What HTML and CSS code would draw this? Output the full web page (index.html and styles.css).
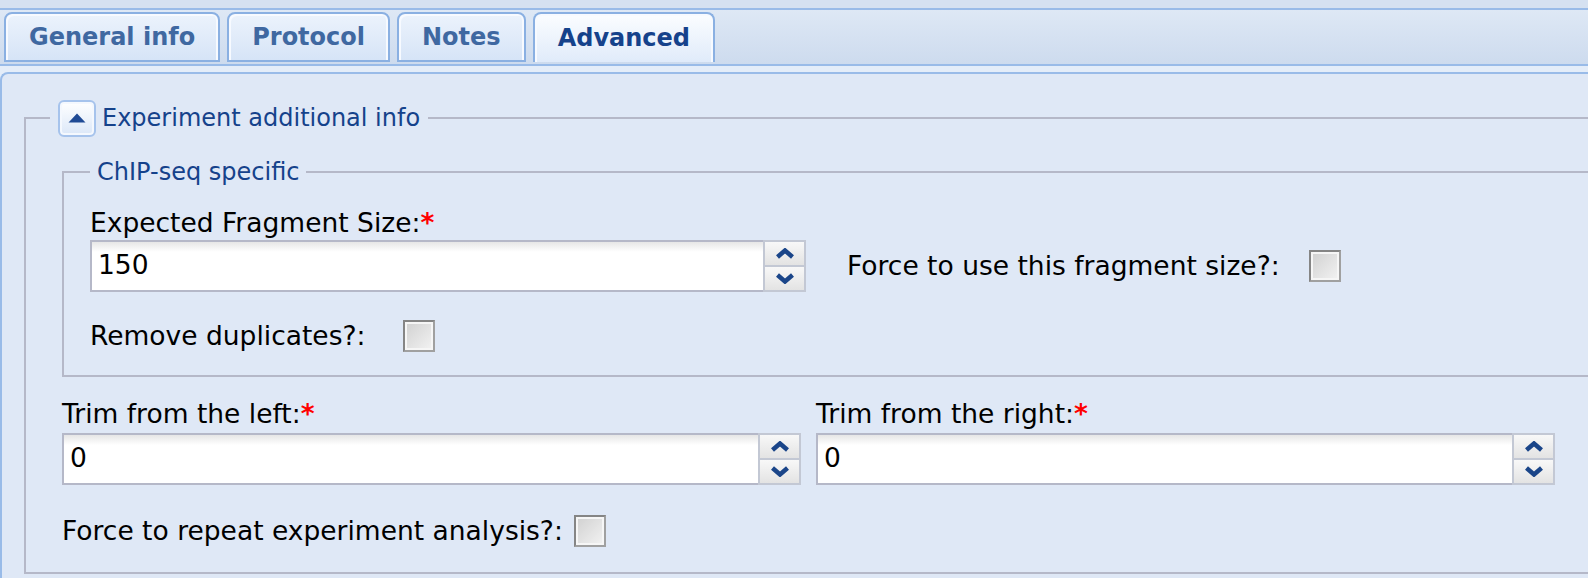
FILE: index.html
```html
<!DOCTYPE html>
<html>
<head>
<meta charset="utf-8">
<title>Advanced</title>
<link rel="stylesheet" href="styles.css">
</head>
<body>
<div class="header">
  <div class="strip">
    <div class="tab">General info</div>
    <div class="tab">Protocol</div>
    <div class="tab">Notes</div>
    <div class="tab active">Advanced</div>
  </div>
</div>
<div class="spacer">
  <div class="panel-body">
    <fieldset class="fs fs-outer">
      <legend class="lg lg-outer">
        <span class="lg-row">
          <span class="collapse-btn">
            <svg width="18" height="10" viewBox="0 0 18 10"><polygon points="9,0.5 17.5,9.5 0.5,9.5" fill="#1f4a95"/></svg>
          </span>
          <span class="lg-text">Experiment additional info</span>
        </span>
      </legend>
      <div class="outer-inner">
        <fieldset class="fs fs-chip">
          <legend class="lg lg-chip">ChIP-seq specific</legend>
          <div class="chip-inner">
            <div class="chip-grid">
              <div class="field-label">Expected Fragment Size:<span class="req">*</span></div>
              <div></div>
              <div class="spin">
                <div class="spin-input">150</div>
                <div class="spin-btns">
                  <div class="spin-btn"><svg width="20" height="11" viewBox="0 0 20 11"><polyline points="2.5,9 10,2.5 17.5,9" fill="none" stroke="#1a4589" stroke-width="4.5"/></svg></div>
                  <div class="spin-btn"><svg width="20" height="11" viewBox="0 0 20 11"><polyline points="2.5,2 10,8.5 17.5,2" fill="none" stroke="#1a4589" stroke-width="4.5"/></svg></div>
                </div>
              </div>
              <div class="check-field">
                <div class="check-label w-fragment">Force to use this fragment size?:</div>
                <div class="cb"></div>
              </div>
            </div>
            <div class="check-field remove-row">
              <div class="check-label w-remove">Remove duplicates?:</div>
              <div class="cb"></div>
            </div>
          </div>
        </fieldset>
        <div class="trim-grid">
          <div class="trim-col">
            <div class="field-label">Trim from the left:<span class="req">*</span></div>
            <div class="spin">
              <div class="spin-input">0</div>
              <div class="spin-btns">
                <div class="spin-btn"><svg width="20" height="11" viewBox="0 0 20 11"><polyline points="2.5,9 10,2.5 17.5,9" fill="none" stroke="#1a4589" stroke-width="4.5"/></svg></div>
                <div class="spin-btn"><svg width="20" height="11" viewBox="0 0 20 11"><polyline points="2.5,2 10,8.5 17.5,2" fill="none" stroke="#1a4589" stroke-width="4.5"/></svg></div>
              </div>
            </div>
          </div>
          <div class="trim-col">
            <div class="field-label">Trim from the right:<span class="req">*</span></div>
            <div class="spin">
              <div class="spin-input">0</div>
              <div class="spin-btns">
                <div class="spin-btn"><svg width="20" height="11" viewBox="0 0 20 11"><polyline points="2.5,9 10,2.5 17.5,9" fill="none" stroke="#1a4589" stroke-width="4.5"/></svg></div>
                <div class="spin-btn"><svg width="20" height="11" viewBox="0 0 20 11"><polyline points="2.5,2 10,8.5 17.5,2" fill="none" stroke="#1a4589" stroke-width="4.5"/></svg></div>
              </div>
            </div>
          </div>
        </div>
        <div class="check-field repeat-row">
          <div class="check-label w-repeat">Force to repeat experiment analysis?:</div>
          <div class="cb"></div>
        </div>
      </div>
    </fieldset>
  </div>
</div>
</body>
</html>
```
FILE: styles.css
```css
html, body {
  margin: 0;
  padding: 0;
  width: 1588px;
  height: 578px;
  overflow: hidden;
  background: #dfe8f6;
  font-family: "DejaVu Sans", Verdana, sans-serif;
}

.header {
  background: #d5e1f1;
  padding-top: 8px;
}

.strip {
  height: 54px;
  border-top: 2px solid #99bbe8;
  border-bottom: 2px solid #99bbe8;
  background: linear-gradient(#dee8f5, #cddbee);
  display: flex;
  align-items: flex-end;
  gap: 7px;
  padding-left: 4px;
}

.tab {
  height: 50px;
  margin-bottom: 2px;
  box-sizing: border-box;
  padding: 0 23px;
  border: 2px solid #8ab0e2;
  border-radius: 8px 8px 0 0;
  display: flex;
  align-items: center;
  font-weight: bold;
  font-size: 24px;
  color: #3f68a1;
  background: linear-gradient(#ecf3fc, #d6e4f7);
  box-shadow: inset 2px 2px 0 #f7faff, inset -2px 0 0 #f7faff;
  white-space: nowrap;
}

.tab.active {
  color: #15428b;
  border-bottom: none;
  background: linear-gradient(#fbfdff, #e0ebfa);
}

.spacer {
  background: #e4edf9;
  padding-top: 6px;
}

.panel-body {
  border-top: 2px solid #99bbe8;
  border-left: 2px solid #99bbe8;
  border-top-left-radius: 8px;
  background: #dfe8f6;
  height: 480px;
  padding: 25px 0 0 22px;
}

.fs {
  border: 2px solid #b5b8c8;
  margin: 0;
  padding: 0;
  min-width: 0;
}

.fs-outer {
  margin-right: -120px;
}

.lg {
  color: #15428b;
  font-size: 24px;
}

.lg-outer {
  margin-left: 24px;
  padding: 0 8px;
}

.lg-row {
  display: flex;
  align-items: center;
  gap: 6px;
  height: 38px;
}

.collapse-btn {
  width: 38px;
  height: 37px;
  box-sizing: border-box;
  border: 2px solid #a6c3ec;
  border-radius: 6px;
  background: linear-gradient(#ffffff, #dbe7f8);
  box-shadow: inset 0 0 0 2px #f4f8fe;
  display: flex;
  align-items: center;
  justify-content: center;
}

.lg-text {
  line-height: 28px;
  white-space: nowrap;
}

.outer-inner {
  padding: 21px 36px 25px 36px;
}

.lg-chip {
  margin-left: 26px;
  padding: 0 7px;
  line-height: 28px;
}

.chip-inner {
  padding: 22px 0 23px 26px;
}

.chip-grid {
  display: grid;
  grid-template-columns: 716px 1fr;
  column-gap: 41px;
  row-gap: 2px;
  align-items: center;
}

.field-label {
  font-size: 26.5px;
  line-height: 30px;
  color: #000;
  white-space: nowrap;
}

.req {
  color: #ff0000;
  font-weight: bold;
}

.spin {
  display: flex;
  height: 52px;
}

.spin-input {
  flex: 1;
  box-sizing: border-box;
  border: 2px solid #b5b8c8;
  border-right: none;
  background: linear-gradient(#e6e6e6, #ffffff 10px);
  font-size: 26.5px;
  line-height: 30px;
  padding: 0 6px 2px 6px;
  display: flex;
  align-items: center;
  color: #000;
}

.spin-btns {
  width: 43px;
  display: flex;
  flex-direction: column;
}

.spin-btn {
  flex: 1;
  box-sizing: border-box;
  border: 2px solid #c3c8d4;
  background: linear-gradient(#f8f8f8, #e3e3e3);
  display: flex;
  align-items: center;
  justify-content: center;
}

.spin-btn + .spin-btn {
  border-top: 1px solid #c3c8d4;
}

.spin-btn:first-child {
  border-bottom: 1px solid #c3c8d4;
}

.check-field {
  display: flex;
  align-items: center;
  height: 32px;
}

.check-label {
  font-size: 26.5px;
  line-height: 30px;
  color: #000;
  white-space: nowrap;
  flex: none;
}

.w-fragment { width: 462px; }
.w-remove { width: 313px; }
.w-repeat { width: 512px; }

.cb {
  width: 32px;
  height: 32px;
  box-sizing: border-box;
  border: 2px solid #858585;
  border-right-color: #a0a0a0;
  border-bottom-color: #a0a0a0;
  background: linear-gradient(135deg, #d0d0d0, #f3f3f3);
  box-shadow: inset 0 0 0 2px #f6f6f6;
  flex: none;
}

.remove-row {
  margin-top: 28px;
}

.trim-grid {
  margin-top: 22px;
  display: grid;
  grid-template-columns: 739px 739px;
  column-gap: 15px;
}

.trim-col {
  display: flex;
  flex-direction: column;
  gap: 4px;
}

.repeat-row {
  margin-top: 30px;
}
```
